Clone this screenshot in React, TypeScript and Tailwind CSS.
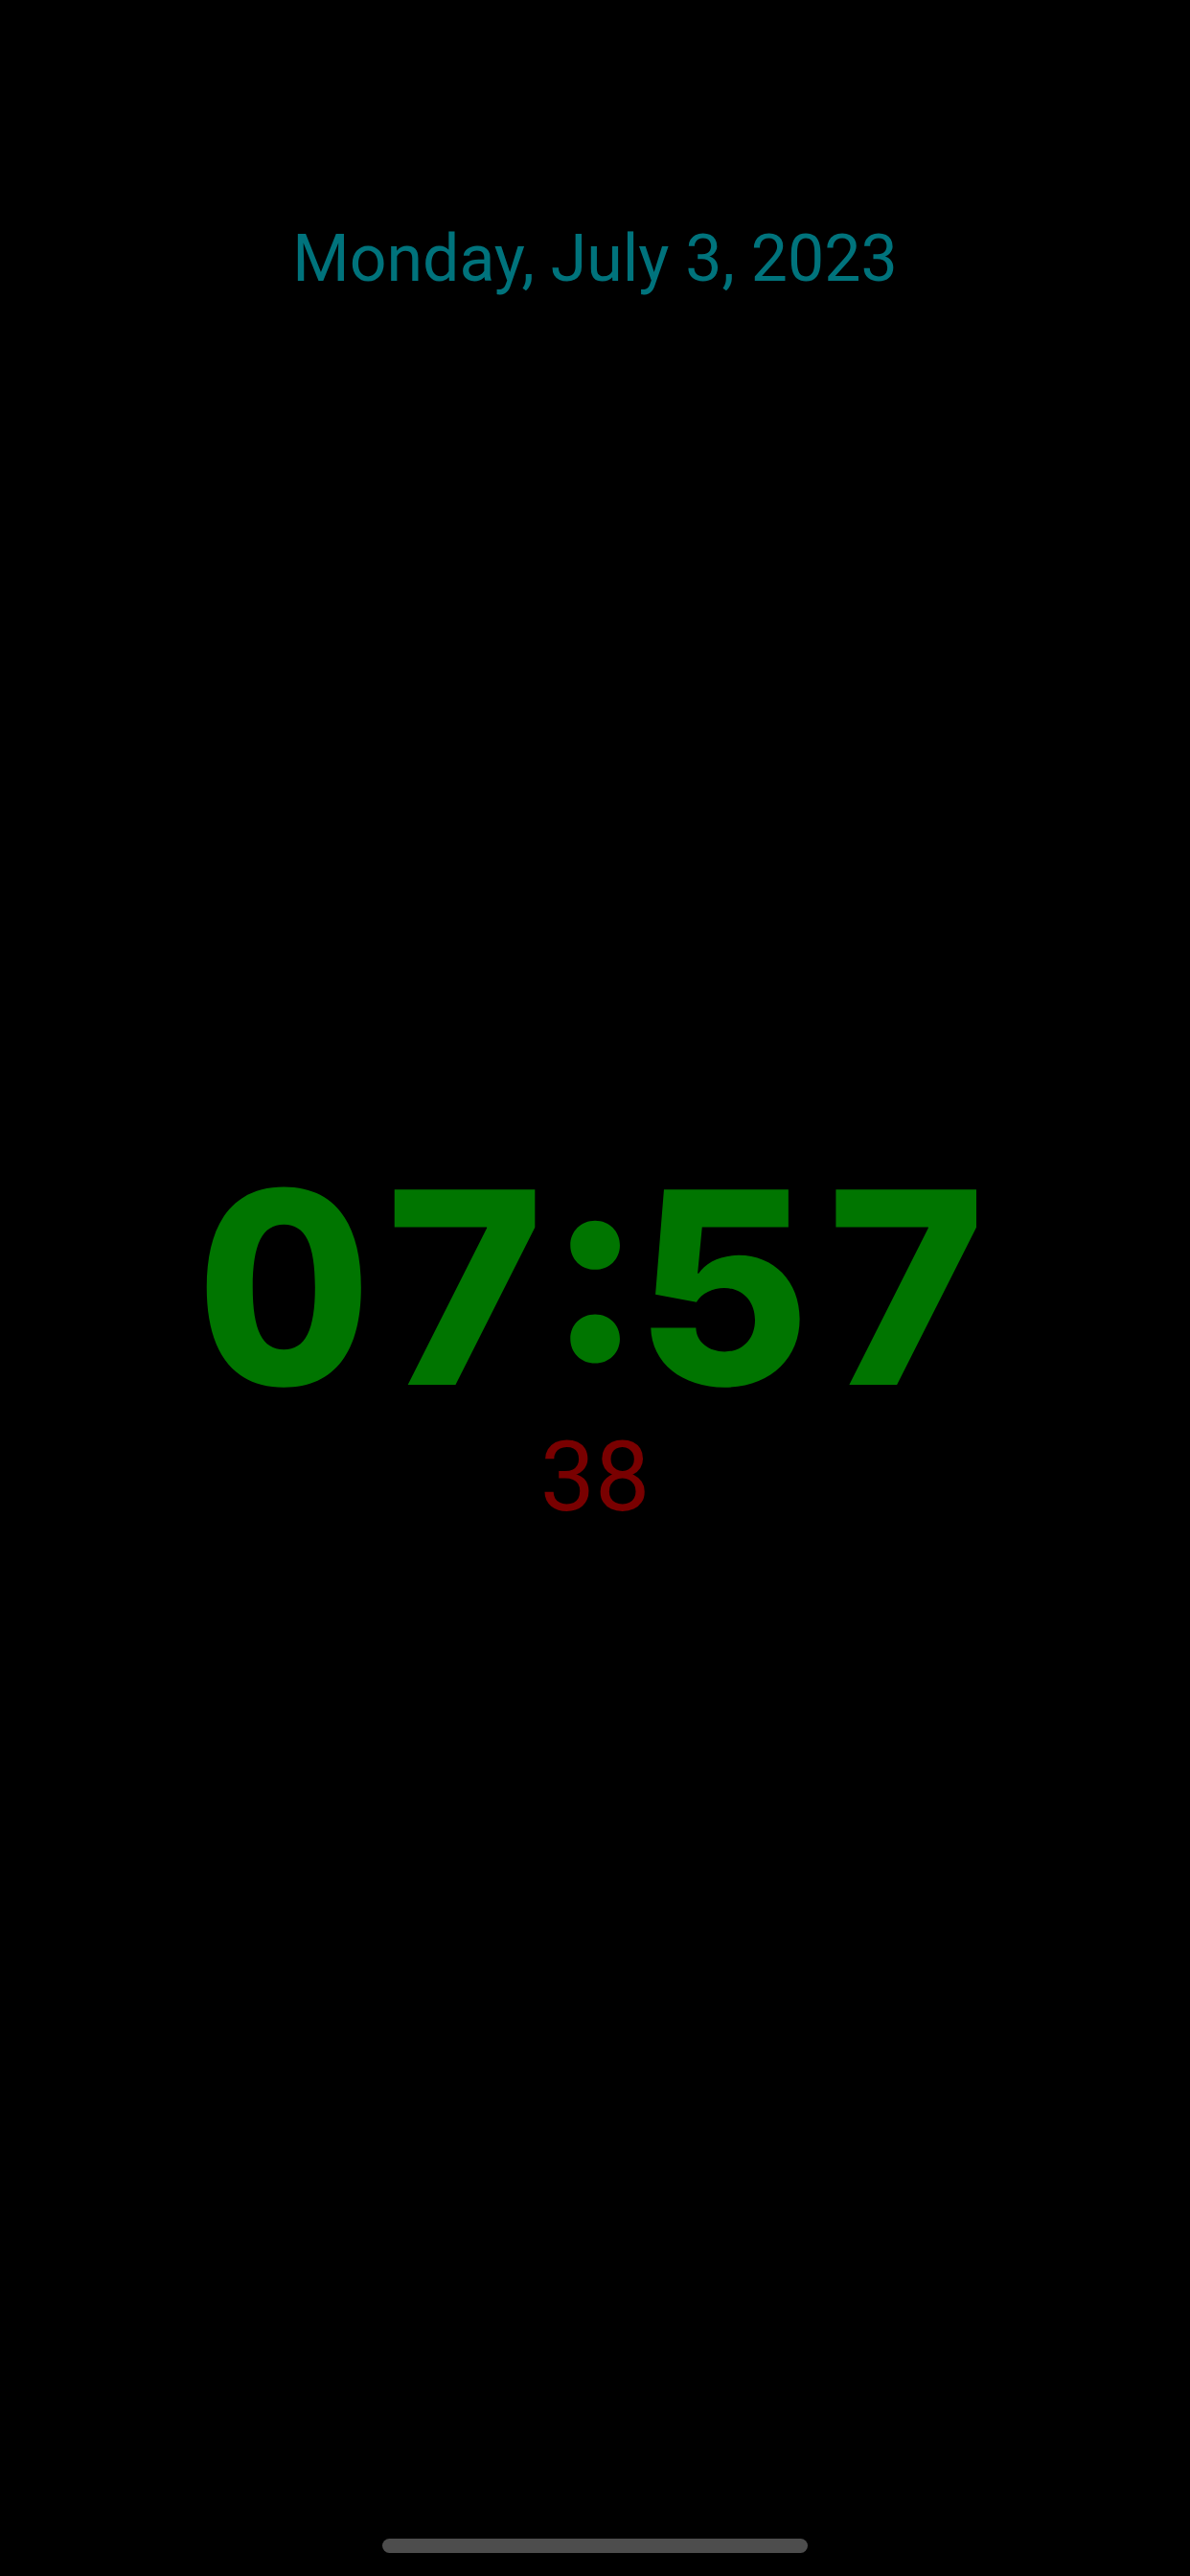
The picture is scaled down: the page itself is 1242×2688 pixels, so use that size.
import React from 'react';

export default function App() {
  return (
    <div className="flex h-[2688px] w-full flex-col items-center overflow-hidden bg-black">
      <div className="mt-[236px] whitespace-nowrap font-['Roboto',sans-serif] text-[68px] font-normal leading-none text-[#00737c]">
        Monday, July 3, 2023
      </div>

      <div className="mt-[900px] -mr-[8px] whitespace-nowrap font-['Inter',sans-serif] text-[280px] font-extrabold leading-none tracking-[8px] tabular-nums text-[#007500] [font-feature-settings:'case','tnum','calt']">
        07:57
      </div>

      <div className="mt-[6px] whitespace-nowrap font-['Roboto',sans-serif] text-[102px] font-normal leading-none text-[#790000]">
        38
      </div>

      <div className="mt-auto mb-[24px] h-[15px] w-[444px] rounded-full bg-[#4d4d4d]" />
    </div>
  );
}
